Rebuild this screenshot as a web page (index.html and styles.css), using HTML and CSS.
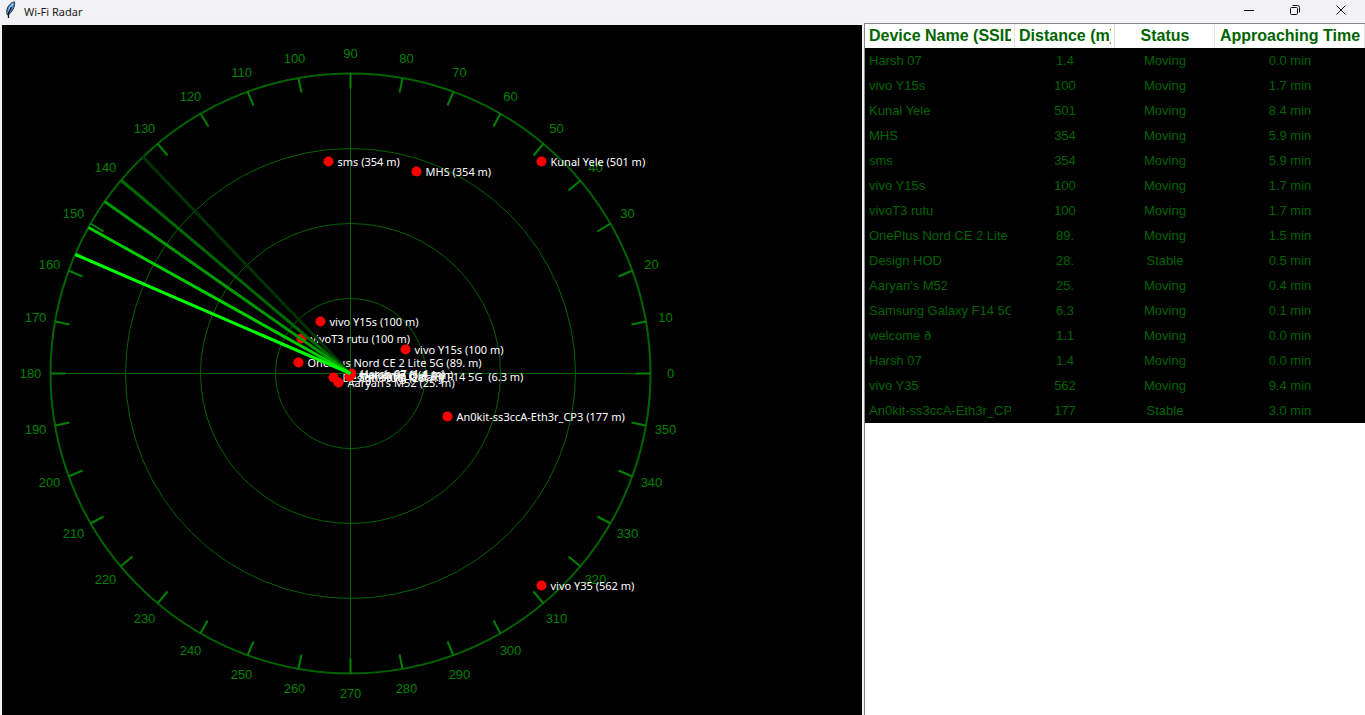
FILE: index.html
```html
<!DOCTYPE html>
<html lang="en">
<head>
<meta charset="utf-8">
<title>Wi-Fi Radar</title>
<link rel="stylesheet" href="styles.css">
</head>
<body>
<div class="window">
  <header class="titlebar">
    <svg class="feather" viewBox="0 0 16 20" aria-hidden="true">
      <path d="M12.500 2C10 2 7 4.500 5.500 8C4.500 10.500 4.500 13 5.500 15C8 14 10.500 11 11.800 7.500C12.500 5.300 12.800 4 12.500 2Z" fill="#4d94e0" stroke="#1d2530" stroke-width="1"/>
      <path d="M11 3.500C8.500 6 6.800 9 6 13" fill="none" stroke="#a9d0f5" stroke-width="1.200"/>
      <path d="M9.500 7L6.500 13L6.500 18" fill="none" stroke="#101418" stroke-width="1.300"/>
    </svg>
    <h1 class="title">Wi-Fi Radar</h1>
    <div class="controls">
      <button class="control" type="button" aria-label="Minimize">
        <svg viewBox="0 0 12 12"><path d="M1 6.500H11"/></svg>
      </button>
      <button class="control" type="button" aria-label="Restore">
        <svg viewBox="0 0 12 12"><rect x="1.500" y="3.500" width="7" height="7" rx="1"/><path d="M3.500 1.500H8.500Q10.500 1.500 10.500 3.500V8.500"/></svg>
      </button>
      <button class="control" type="button" aria-label="Close">
        <svg viewBox="0 0 12 12"><path d="M1.500 1.500L10.500 10.500M10.500 1.500L1.500 10.500"/></svg>
      </button>
    </div>
  </header>
  <main class="content">
    <svg class="radar" role="img" aria-label="Radar of nearby Wi-Fi devices">
      <g transform="translate(348.5 348.5)">
        <g class="rings">
          <circle r="75"/>
          <circle r="150"/>
          <circle r="225"/>
          <circle class="outer" r="300"/>
          <path d="M-300 0H300M0 -300V300"/>
        </g>
        <g class="ticks" id="ticks"></g>
        <g class="degrees" id="degrees"></g>
        <g class="devices" id="devices"></g>
        <g class="sweep" id="sweep"></g>
      </g>
    </svg>
    <section class="list">
      <table class="devices-table">
        <colgroup><col class="col-name"><col class="col-distance"><col class="col-status"><col class="col-time"></colgroup>
        <thead>
          <tr>
            <th scope="col"><div class="clip">Device Name (SSID)</div></th>
            <th scope="col"><div class="clip">Distance (m)</div></th>
            <th scope="col"><div class="clip">Status</div></th>
            <th scope="col"><div class="clip">Approaching Time</div></th>
          </tr>
        </thead>
        <tbody>
          <tr><td><div class="clip">Harsh 07</div></td><td>1.4</td><td>Moving</td><td>0.0 min</td></tr>
          <tr><td><div class="clip">vivo Y15s</div></td><td>100</td><td>Moving</td><td>1.7 min</td></tr>
          <tr><td><div class="clip">Kunal Yele</div></td><td>501</td><td>Moving</td><td>8.4 min</td></tr>
          <tr><td><div class="clip">MHS</div></td><td>354</td><td>Moving</td><td>5.9 min</td></tr>
          <tr><td><div class="clip">sms</div></td><td>354</td><td>Moving</td><td>5.9 min</td></tr>
          <tr><td><div class="clip">vivo Y15s</div></td><td>100</td><td>Moving</td><td>1.7 min</td></tr>
          <tr><td><div class="clip">vivoT3 rutu</div></td><td>100</td><td>Moving</td><td>1.7 min</td></tr>
          <tr><td><div class="clip">OnePlus Nord CE 2 Lite 5G</div></td><td>89.</td><td>Moving</td><td>1.5 min</td></tr>
          <tr><td><div class="clip">Design HOD</div></td><td>28.</td><td>Stable</td><td>0.5 min</td></tr>
          <tr><td><div class="clip">Aaryan's M52</div></td><td>25.</td><td>Moving</td><td>0.4 min</td></tr>
          <tr><td><div class="clip">Samsung Galaxy F14 5G</div></td><td>6.3</td><td>Moving</td><td>0.1 min</td></tr>
          <tr><td><div class="clip">welcome ð</div></td><td>1.1</td><td>Moving</td><td>0.0 min</td></tr>
          <tr><td><div class="clip">Harsh 07</div></td><td>1.4</td><td>Moving</td><td>0.0 min</td></tr>
          <tr><td><div class="clip">vivo Y35</div></td><td>562</td><td>Moving</td><td>9.4 min</td></tr>
          <tr><td><div class="clip">An0kit-ss3ccA-Eth3r_CP3</div></td><td>177</td><td>Stable</td><td>3.0 min</td></tr>
        </tbody>
      </table>
    </section>
  </main>
</div>
<script src="radar.js"></script>
</body>
</html>
```
FILE: styles.css
```css
* {
  box-sizing: border-box;
}

body {
  margin: 0;
  font-family: "Noto Sans", "Open Sans", sans-serif;
}

.window {
  display: flex;
  flex-direction: column;
  height: 100vh;
  background: #f0f0f0;
}

.titlebar {
  display: flex;
  align-items: flex-start;
  gap: 6px;
  height: 23px;
  padding: 0 1px 0 2px;
  background: #f3f3f6;
}

.feather {
  width: 16px;
  height: 20px;
}

.title {
  flex: 1;
  margin: 0;
  font-size: 11px;
  font-weight: 400;
  line-height: 23px;
  color: #1a1a1a;
}

.controls {
  display: flex;
}

.control {
  display: flex;
  align-items: center;
  justify-content: center;
  width: 46px;
  height: 20px;
  padding: 0;
  border: 0;
  background: none;
}

.control svg {
  width: 12px;
  height: 12px;
  fill: none;
  stroke: #111;
  stroke-width: 1;
}

.content {
  flex: 1;
  display: grid;
  grid-template-columns: minmax(0, 1fr) 501px;
  gap: 2px;
  min-height: 0;
  padding-left: 2px;
}

.radar {
  width: 100%;
  height: calc(100% - 2px);
  margin-top: 2px;
  background: #000;
}

.rings {
  fill: none;
  stroke: #006400;
  stroke-width: 1;
}

.rings .outer {
  stroke-width: 2;
}

.ticks {
  stroke: #008000;
  stroke-width: 2;
}

.degrees {
  fill: #008000;
  font-family: "Liberation Sans", Arial, sans-serif;
  font-size: 13px;
  text-anchor: middle;
}

.devices circle {
  fill: #f00;
}

.devices text {
  fill: #fff;
  font-size: 11px;
}

.sweep {
  stroke-width: 3;
}

.list {
  border-top: 1px solid #828790;
  border-left: 1px solid #828790;
  background: #fff;
  font-family: "Liberation Sans", Arial, sans-serif;
}

.devices-table {
  width: 100%;
  table-layout: fixed;
  border-collapse: separate;
  border-spacing: 0;
}

.col-name,
.col-time {
  width: 30%;
}

.col-distance,
.col-status {
  width: 20%;
}

.devices-table th {
  height: 24px;
  padding: 0 3px 0 4px;
  border-right: 1px solid #e0e0e0;
  font-size: 16px;
  line-height: 24px;
  color: #006400;
}

.devices-table td {
  height: 25px;
  padding: 0 4px;
  background: #000;
  color: #006400;
  font-size: 13px;
  line-height: 25px;
  text-align: center;
}

.devices-table td:first-child {
  text-align: left;
}

.clip {
  overflow: hidden;
  white-space: nowrap;
}
```
FILE: radar.js
```js
const SVG_NS = "http://www.w3.org/2000/svg";
const RADIUS = 300;

const devices = [
  ["sms (354 m)", -22, -212],
  ["MHS (354 m)", 66, -202],
  ["Kunal Yele (501 m)", 191, -212],
  ["vivo Y15s (100 m)", -30, -52],
  ["vivoT3 rutu (100 m)", -49, -35],
  ["vivo Y15s (100 m)", 55, -24],
  ["OnePlus Nord CE 2 Lite 5G (89. m)", -52, -11],
  ["Design HOD (28. m)", -17, 4],
  ["Aaryan's M52 (25. m)", -12, 9],
  ["Samsung Galaxy F14 5G\u00a0 (6.3 m)", -1, 3],
  ["welcome ð (1.1 m)", 0, 1],
  ["Harsh 07 (1.4 m)", 1, 0],
  ["Harsh 07 (1.4 m)", 0, 1],
  ["An0kit-ss3ccA-Eth3r_CP3 (177 m)", 97, 43],
  ["vivo Y35 (562 m)", 191, 212]
];

const beams = [
  [133.8, "#003300"],
  [139.9, "#006600"],
  [145.1, "#009900"],
  [150.9, "#00cc00"],
  [156.6, "#00ff00"]
];

function polar(degrees, r) {
  const a = degrees * Math.PI / 180;
  return [Math.round(r * Math.cos(a)), Math.round(-r * Math.sin(a))];
}

function add(parentId, name, attributes, text) {
  const el = document.createElementNS(SVG_NS, name);
  for (const key in attributes) el.setAttribute(key, attributes[key]);
  if (text) el.textContent = text;
  document.getElementById(parentId).appendChild(el);
}

for (let angle = 0; angle < 360; angle += 10) {
  const [x1, y1] = polar(angle, RADIUS - 15);
  const [x2, y2] = polar(angle, RADIUS);
  const [tx, ty] = polar(angle, RADIUS + 20);
  add("ticks", "line", { x1, y1, x2, y2 });
  add("degrees", "text", { x: tx, y: ty + 4 }, String(angle));
}

for (const [label, x, y] of devices) {
  add("devices", "circle", { cx: x, cy: y, r: 5 });
  add("devices", "text", { x: x + 9, y: y + 4 }, label);
}

for (const [angle, stroke] of beams) {
  const [x2, y2] = polar(angle, RADIUS);
  add("sweep", "line", { x1: 0, y1: 0, x2, y2, stroke });
}
```
